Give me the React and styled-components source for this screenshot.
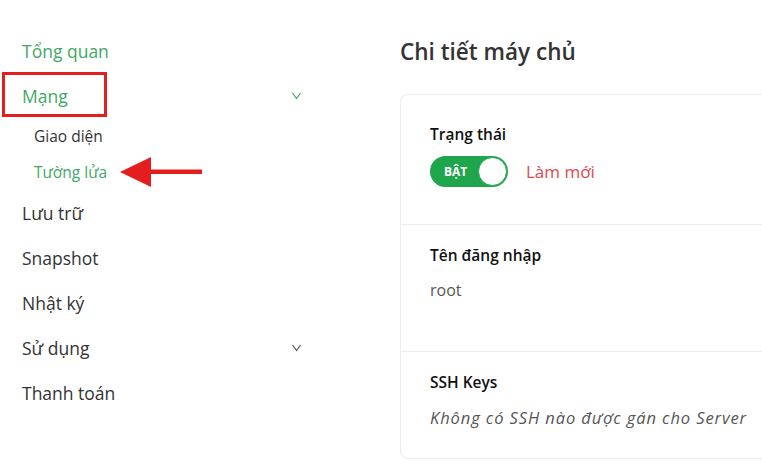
import React from 'react';
import styled, { createGlobalStyle } from 'styled-components';

const GlobalStyle = createGlobalStyle`
  html, body {
    margin: 0;
    padding: 0;
    background: #fff;
    font-family: "Open Sans", "Noto Sans", sans-serif;
  }
`;

const Page = styled.div`
  display: grid;
  grid-template-columns: 400px 1fr;
  width: 762px;
  height: 468px;
  overflow: hidden;
`;

const Sidebar = styled.nav`
  display: flex;
  flex-direction: column;
  padding: 28px 0 0 22px;
`;

const NavItem = styled.div`
  position: relative;
  display: flex;
  align-items: center;
  justify-content: space-between;
  width: 280px;
  height: 45px;
  font-size: 17.5px;
  color: ${({ active }) => (active ? '#3fa865' : '#333')};
`;

const SubItem = styled.div`
  position: relative;
  display: flex;
  align-items: center;
  height: ${({ h }) => h}px;
  padding-left: 12px;
  font-size: 15.5px;
  color: ${({ active }) => (active ? '#3fa865' : '#333')};
`;

const Chevron = styled.span`
  display: flex;
  color: ${({ active }) => (active ? '#3fa865' : '#555')};
`;

const Highlight = styled.div`
  position: absolute;
  left: -20px;
  top: 50%;
  margin-top: -24px;
  width: 99px;
  height: 39px;
  border: 3px solid #e41e1e;
`;

const Arrow = styled.svg`
  position: absolute;
  left: 98px;
  top: 50%;
  margin-top: -15px;
`;

const Main = styled.main`
  display: flex;
  flex-direction: column;
`;

const Title = styled.h1`
  margin: 0;
  height: 94px;
  display: flex;
  align-items: center;
  padding-top: 8px;
  box-sizing: border-box;
  font-size: 22.5px;
  font-weight: 600;
  color: #333;
`;

const Card = styled.div`
  border: 1px solid #ececec;
  border-right: none;
  border-radius: 8px 0 0 8px;
  padding-top: 9px;
  width: 400px;
`;

const Section = styled.div`
  display: flex;
  flex-direction: column;
  height: ${({ h }) => h}px;
  box-sizing: border-box;
  padding: 20px 29px 0;
  border-bottom: ${({ last }) => (last ? 'none' : '1px solid #ececec')};
`;

const Label = styled.div`
  font-size: 15.5px;
  font-weight: 600;
  color: #111;
  line-height: 20px;
`;

const Value = styled.div`
  margin-top: 14px;
  font-size: ${({ italic }) => (italic ? 16.5 : 16)}px;
  letter-spacing: ${({ italic }) => (italic ? 0.9 : 0)}px;
  color: #555;
  font-style: ${({ italic }) => (italic ? 'italic' : 'normal')};
`;

const Row = styled.div`
  display: flex;
  align-items: center;
  gap: 18px;
  margin-top: 12px;
`;

const Toggle = styled.div`
  display: flex;
  align-items: center;
  justify-content: space-between;
  width: 78px;
  height: 31px;
  box-sizing: border-box;
  border-radius: 16px;
  background: #1fa54b;
  padding: 0 1px 0 14px;
  color: #fff;
  font-size: 12px;
  font-weight: 700;
`;

const Knob = styled.div`
  width: 29px;
  height: 29px;
  border-radius: 50%;
  background: #fff;
  box-sizing: border-box;
  border: 1px solid #1fa54b;
`;

const Refresh = styled.span`
  font-size: 17px;
  color: #e04a4e;
`;

const ChevronIcon = () => (
  <svg width="11" height="8" viewBox="0 0 11 8">
    <path d="M1.5 1 L5.5 6.5 L9.5 1" fill="none" stroke="currentColor" strokeWidth="1.2" />
  </svg>
);

export default function App() {
  return (
    <>
      <GlobalStyle />
      <Page>
        <Sidebar>
          <NavItem active>Tổng quan</NavItem>
          <NavItem active>
            <span style={{ position: 'relative' }}>
              Mạng
              <Highlight />
            </span>
            <Chevron active>
              <ChevronIcon />
            </Chevron>
          </NavItem>
          <SubItem h={36}>Giao diện</SubItem>
          <SubItem h={36} active>
            Tường lửa
            <Arrow width="82" height="30" viewBox="0 0 82 30">
              <polygon points="0,15 31,0 31,30" fill="#e41e1e" />
              <rect x="29" y="12.5" width="53" height="4.5" fill="#e41e1e" />
            </Arrow>
          </SubItem>
          <NavItem>Lưu trữ</NavItem>
          <NavItem>Snapshot</NavItem>
          <NavItem>Nhật ký</NavItem>
          <NavItem>
            Sử dụng
            <Chevron>
              <ChevronIcon />
            </Chevron>
          </NavItem>
          <NavItem>Thanh toán</NavItem>
        </Sidebar>
        <Main>
          <Title>Chi tiết máy chủ</Title>
          <Card>
            <Section h={121}>
              <Label>Trạng thái</Label>
              <Row>
                <Toggle>
                  BẬT
                  <Knob />
                </Toggle>
                <Refresh>Làm mới</Refresh>
              </Row>
            </Section>
            <Section h={127}>
              <Label>Tên đăng nhập</Label>
              <Value>root</Value>
            </Section>
            <Section h={106} last>
              <Label>SSH Keys</Label>
              <Value italic>Không có SSH nào được gán cho Server</Value>
            </Section>
          </Card>
        </Main>
      </Page>
    </>
  );
}
